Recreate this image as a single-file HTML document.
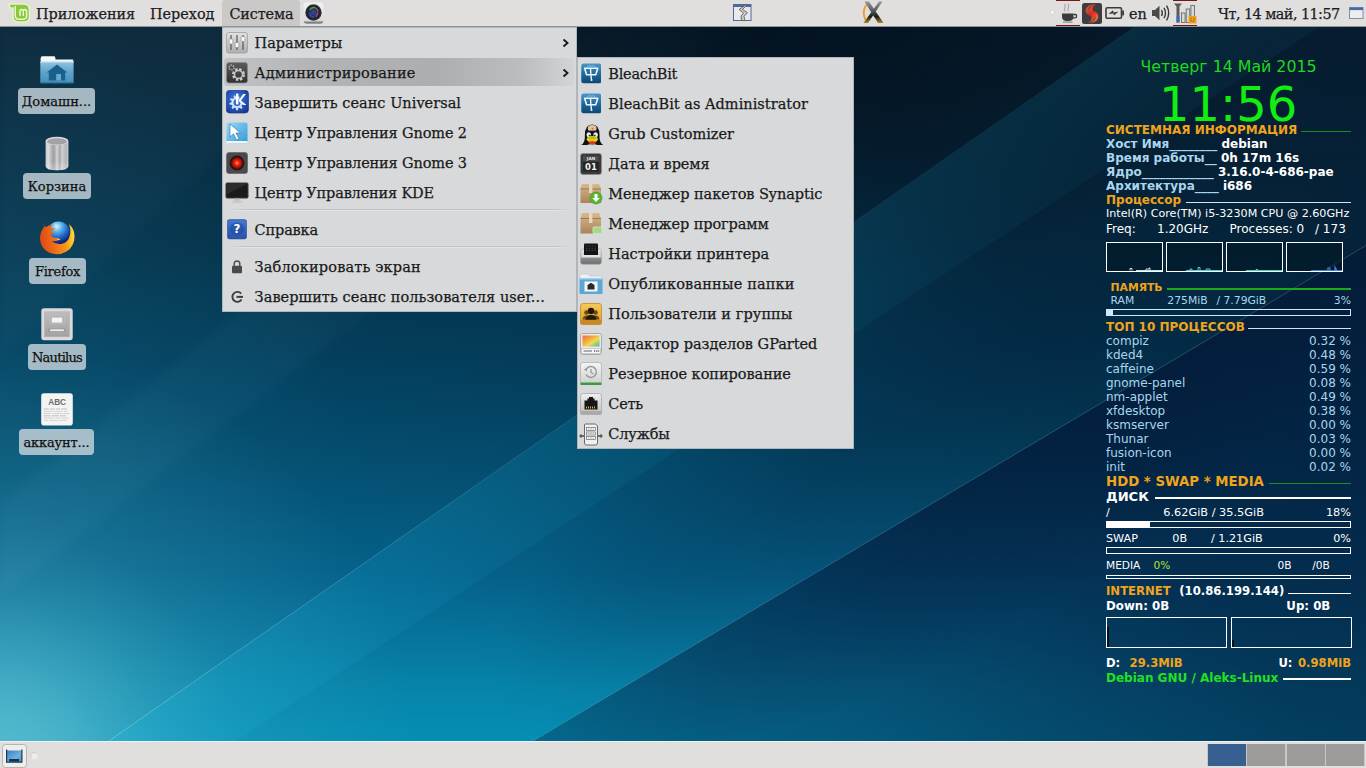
<!DOCTYPE html>
<html lang="ru">
<head>
<meta charset="utf-8">
<title>Desktop</title>
<style>
html,body{margin:0;padding:0;width:1366px;height:768px;overflow:hidden;background:#04304a;}
body{position:relative;font-family:"DejaVu Serif","Liberation Serif",serif;font-size:14.5px;color:#1a1a1a;}
#bg{position:absolute;left:0;top:0;width:1366px;height:768px;display:block;}
.abs{position:absolute;}

/* panels */
#tp{position:absolute;left:0;top:0;width:1366px;height:26px;background:#e0dfde;border-bottom:1px solid #8e9499;}
#bp{position:absolute;left:0;top:741px;width:1366px;height:27px;background:#e0dfde;border-top:1px solid #eef4f6;box-sizing:border-box;}
.pt{position:absolute;top:0;height:26px;line-height:29px;font-size:14.4px;color:#1b1b22;white-space:nowrap;}
#sysbtn{position:absolute;left:222px;top:0;width:78px;height:26px;background:#cac9c8;border-radius:3px 3px 0 0;}
.ic{position:absolute;display:block;}
/* desktop icons */
.dl{position:absolute;height:26px;line-height:27px;background:rgba(196,210,218,0.83);border-radius:4px;text-align:center;font-size:13px;color:#111;white-space:nowrap;}
/* menus */
.menu{position:absolute;background:#d7d9da;box-shadow:inset 0 0 0 1px rgba(150,156,164,0.6);}
.mi{position:absolute;left:0;height:30px;line-height:30px;white-space:nowrap;font-size:14.5px;color:#1a1a1a;}
.mi span{position:absolute;left:32.6px;top:0;}
#m2 .mi span{left:31.3px;}
.mi span,.pt,.dl{-webkit-text-stroke:0.25px currentColor;}
.sep{position:absolute;left:8px;right:8px;height:2px;background:linear-gradient(90deg,rgba(190,192,193,0) 0,#bfc1c2 14px,#bfc1c2 calc(100% - 14px),rgba(190,192,193,0) 100%) top/100% 1px no-repeat,linear-gradient(90deg,rgba(228,230,231,0) 0,#e4e6e7 14px,#e4e6e7 calc(100% - 14px),rgba(228,230,231,0) 100%) bottom/100% 1px no-repeat;}
/* conky */
#ck{position:absolute;left:0;top:0;width:1366px;height:0;font-family:"DejaVu Sans","Liberation Sans",sans-serif;font-size:12px;color:#fff;}
#ck span,#ck i{position:absolute;white-space:nowrap;line-height:14px;height:14px;font-style:normal;}
#ck .o{color:#f0a41c;font-weight:bold;}
#ck .b{color:#a9d6ee;font-weight:bold;}
#ck .w{color:#fff;font-weight:bold;}
#ck .l{color:#a9d6ee;}
#ck .g{color:#1fe01f;}
#ck .ln{position:absolute;height:1px;}
#ck .bx{position:absolute;border:1px solid #fff;box-sizing:border-box;}
</style>
</head>
<body>
<svg id="bg" width="1366" height="768" viewBox="0 0 1366 768">
<defs>
<linearGradient id="g0" x1="0" y1="27" x2="0" y2="741" gradientUnits="userSpaceOnUse">
<stop offset="0" stop-color="rgb(11,40,58)"/>
<stop offset="0.315" stop-color="rgb(6,52,76)"/>
<stop offset="0.473" stop-color="rgb(4,64,95)"/>
<stop offset="0.553" stop-color="rgb(4,72,104)"/>
<stop offset="0.765" stop-color="rgb(5,97,138)"/>
<stop offset="0.929" stop-color="rgb(7,132,170)"/>
<stop offset="1" stop-color="rgb(5,142,180)"/>
</linearGradient>
<linearGradient id="g2" x1="200" y1="768" x2="1366" y2="0" gradientUnits="userSpaceOnUse">
<stop offset="0.2" stop-color="rgb(2,15,36)" stop-opacity="0"/>
<stop offset="0.41" stop-color="rgb(2,15,36)" stop-opacity="0.08"/>
<stop offset="0.56" stop-color="rgb(2,15,36)" stop-opacity="0.22"/>
<stop offset="0.68" stop-color="rgb(2,15,36)" stop-opacity="0.37"/>
<stop offset="1" stop-color="rgb(2,15,36)" stop-opacity="0.5"/>
</linearGradient>
<radialGradient id="gLft" cx="-100" cy="450" r="450" gradientUnits="userSpaceOnUse">
<stop offset="0" stop-color="rgb(40,160,190)" stop-opacity="0.13"/>
<stop offset="0.5" stop-color="rgb(40,160,190)" stop-opacity="0.10"/>
<stop offset="1" stop-color="rgb(40,160,190)" stop-opacity="0"/>
</radialGradient>
<radialGradient id="g1" cx="0" cy="768" r="420" gradientUnits="userSpaceOnUse">
<stop offset="0" stop-color="rgb(110,200,215)" stop-opacity="0.75"/>
<stop offset="0.067" stop-color="rgb(110,200,215)" stop-opacity="0.72"/>
<stop offset="0.124" stop-color="rgb(110,200,215)" stop-opacity="0.67"/>
<stop offset="0.217" stop-color="rgb(110,200,215)" stop-opacity="0.55"/>
<stop offset="0.265" stop-color="rgb(110,200,215)" stop-opacity="0.46"/>
<stop offset="0.41" stop-color="rgb(110,200,215)" stop-opacity="0.27"/>
<stop offset="0.57" stop-color="rgb(110,200,215)" stop-opacity="0.13"/>
<stop offset="0.68" stop-color="rgb(110,200,215)" stop-opacity="0.09"/>
<stop offset="0.83" stop-color="rgb(110,200,215)" stop-opacity="0.05"/>
<stop offset="1" stop-color="rgb(110,200,215)" stop-opacity="0"/>
</radialGradient>
<linearGradient id="gD" x1="530" y1="0" x2="1100" y2="0" gradientUnits="userSpaceOnUse">
<stop offset="0" stop-color="rgb(3,19,54)" stop-opacity="0.31"/>
<stop offset="1" stop-color="rgb(3,19,54)" stop-opacity="0.44"/>
</linearGradient>
<linearGradient id="gL" x1="70" y1="768" x2="1173" y2="0" gradientUnits="userSpaceOnUse">
<stop offset="0" stop-color="#bfeaf5" stop-opacity="0.34"/>
<stop offset="0.45" stop-color="#bfeaf5" stop-opacity="0.11"/>
<stop offset="0.7" stop-color="#bfeaf5" stop-opacity="0.06"/>
<stop offset="1" stop-color="#bfeaf5" stop-opacity="0.03"/>
</linearGradient>
<radialGradient id="gT" cx="0" cy="0" r="1" gradientUnits="userSpaceOnUse" gradientTransform="translate(760 10) scale(560 270)">
<stop offset="0" stop-color="rgb(1,6,14)" stop-opacity="0.55"/>
<stop offset="0.5" stop-color="rgb(1,6,14)" stop-opacity="0.32"/>
<stop offset="1" stop-color="rgb(1,6,14)" stop-opacity="0"/>
</radialGradient>
<radialGradient id="gDe" cx="0" cy="0" r="1" gradientUnits="userSpaceOnUse" gradientTransform="translate(960 485) rotate(-30.9) scale(470 150)">
<stop offset="0" stop-color="rgb(2,13,42)" stop-opacity="0.3"/>
<stop offset="0.6" stop-color="rgb(2,13,42)" stop-opacity="0.14"/>
<stop offset="1" stop-color="rgb(2,13,42)" stop-opacity="0"/>
</radialGradient>
<radialGradient id="gCe" cx="0" cy="0" r="1" gradientUnits="userSpaceOnUse" gradientTransform="translate(830 470) rotate(-32) scale(380 120)">
<stop offset="0" stop-color="rgb(2,14,40)" stop-opacity="0.16"/>
<stop offset="0.6" stop-color="rgb(2,14,40)" stop-opacity="0.08"/>
<stop offset="1" stop-color="rgb(2,14,40)" stop-opacity="0"/>
</radialGradient>
<filter id="blr" x="-5%" y="-5%" width="110%" height="110%"><feGaussianBlur stdDeviation="5"/></filter>
<linearGradient id="gR" x1="0" y1="600" x2="700" y2="27" gradientUnits="userSpaceOnUse">
<stop offset="0" stop-color="rgb(140,210,235)" stop-opacity="0.05"/>
<stop offset="0.6" stop-color="rgb(140,210,235)" stop-opacity="0.025"/>
<stop offset="1" stop-color="rgb(140,210,235)" stop-opacity="0.01"/>
</linearGradient>
<linearGradient id="gBp" x1="600" y1="399" x2="651.4" y2="472.9" gradientUnits="userSpaceOnUse">
<stop offset="0" stop-color="rgb(20,180,222)" stop-opacity="0.125"/>
<stop offset="1" stop-color="rgb(20,180,222)" stop-opacity="0.055"/>
</linearGradient>
<linearGradient id="gBl" x1="70" y1="768" x2="640" y2="371" gradientUnits="userSpaceOnUse">
<stop offset="0" stop-color="rgb(30,190,230)" stop-opacity="0.09"/>
<stop offset="1" stop-color="rgb(30,190,230)" stop-opacity="0"/>
</linearGradient>
</defs>
<rect width="1366" height="768" fill="url(#g0)"/>
<rect width="1366" height="768" fill="url(#g2)"/>
<rect width="1366" height="768" fill="url(#gT)"/>
<rect width="1366" height="768" fill="url(#gLft)"/>
<rect width="1366" height="768" fill="url(#g1)"/>
<g filter="url(#blr)"><polygon points="0,27 358,27 0,358" fill="rgb(140,200,230)" fill-opacity="0.028"/>
<polygon points="0,504 595,27 740,27 0,597" fill="url(#gR)"/></g>
<!-- band B between E1 and E2 -->
<polygon points="70,768 1173,0 1360,0 195,768" fill="url(#gBp)"/>
<polygon points="70,768 1173,0 1360,0 195,768" fill="url(#gBl)"/>
<!-- region D below E3 -->
<polygon points="487.5,768 1366,245.5 1366,768" fill="url(#gD)"/>
<polygon points="487.5,768 1366,245.5 1366,768" fill="url(#gDe)"/>
<polygon points="195,768 1360,0 1366,0 1366,245.5 487.5,768" fill="url(#gCe)"/>
<line x1="70" y1="768" x2="1173" y2="0" stroke="url(#gL)" stroke-width="1"/>
<line x1="487.5" y1="768" x2="1366" y2="245.5" stroke="#9fd8ea" stroke-opacity="0.22" stroke-width="1"/>
</svg>
<!-- desktop icons -->
<svg class="ic" style="left:40px;top:55px" width="34" height="29" viewBox="0 0 34 29">
<defs><linearGradient id="fd1" x1="0" y1="0" x2="0" y2="1"><stop offset="0" stop-color="#8fc3df"/><stop offset="0.5" stop-color="#5ea3cb"/><stop offset="1" stop-color="#4390be"/></linearGradient></defs>
<path d="M1 2.5 Q1 1.2 2.3 1.2 H14 Q15 1.2 15.2 2.2 L15.6 4.6 H32.2 Q33.4 4.6 33.4 5.8 V8 H0.6 V3 Z" fill="#f5f8fa"/>
<rect x="0.3" y="6.8" width="33.3" height="21.4" rx="1" fill="url(#fd1)"/>
<rect x="0.3" y="6.8" width="33.3" height="1" fill="#b5d9ec"/>
<rect x="0.3" y="27" width="33.3" height="1.2" fill="#2f78a6"/>
<path d="M17 9.6 L27.4 17.6 H25.2 V25.5 H8.8 V17.6 H6.6 Z" fill="#1b608d"/>
<rect x="16.2" y="19" width="4.8" height="6.5" fill="#62aad0"/>
</svg>
<div class="dl" style="left:18px;top:88px;width:77px">Домашн...</div>
<svg class="ic" style="left:45px;top:136px" width="24" height="35" viewBox="0 0 24 35">
<defs><linearGradient id="tr1" x1="0" y1="0" x2="1" y2="0"><stop offset="0" stop-color="#c9c9cc"/><stop offset="0.12" stop-color="#dcdce0"/><stop offset="0.3" stop-color="#a9a9ad"/><stop offset="0.38" stop-color="#a2a2a6"/><stop offset="0.5" stop-color="#d6d6da"/><stop offset="0.62" stop-color="#a6a6aa"/><stop offset="0.72" stop-color="#cfcfd3"/><stop offset="0.9" stop-color="#b5b5b9"/><stop offset="1" stop-color="#d0d0d4"/></linearGradient>
<linearGradient id="tr2" x1="0" y1="0" x2="0" y2="1"><stop offset="0" stop-color="#fff" stop-opacity="0"/><stop offset="0.7" stop-color="#fff" stop-opacity="0"/><stop offset="1" stop-color="#fff" stop-opacity="0.3"/></linearGradient></defs>
<path d="M0.6 5 V30 Q0.6 34.2 12 34.2 Q23.4 34.2 23.4 30 V5 Z" fill="url(#tr1)"/>
<path d="M0.6 5 V30 Q0.6 34.2 12 34.2 Q23.4 34.2 23.4 30 V5 Z" fill="url(#tr2)"/>
<ellipse cx="12" cy="5" rx="11.4" ry="4.2" fill="#dadade"/>
<ellipse cx="12" cy="5.4" rx="10" ry="3.2" fill="#a3a3a7"/>
</svg>
<div class="dl" style="left:23px;top:173px;width:68px">Корзина</div>
<svg class="ic" style="left:39px;top:220px" width="37" height="36" viewBox="0 0 37 36">
<defs><radialGradient id="ffg" cx="0.42" cy="0.22" r="0.75"><stop offset="0" stop-color="#dff3fb"/><stop offset="0.3" stop-color="#5db4e8"/><stop offset="0.65" stop-color="#1f63c4"/><stop offset="1" stop-color="#0b1f6a"/></radialGradient>
<linearGradient id="ffo" x1="0" y1="0.3" x2="1" y2="0.2"><stop offset="0" stop-color="#e04a10"/><stop offset="0.4" stop-color="#f0701a"/><stop offset="0.72" stop-color="#f59a1c"/><stop offset="0.9" stop-color="#fdc92a"/><stop offset="1" stop-color="#ffe14a"/></linearGradient></defs>
<circle cx="19.5" cy="13" r="11.5" fill="url(#ffg)"/>
<path d="M4.2 3.8 L5.6 6.6 Q1 11.5 1 18.5 Q1.5 28.5 10 32.5 Q19 36.5 27.5 31.5 Q35.5 26.5 35.5 16.5 Q35.5 9 30 4 Q32.3 10 30.8 15.8 Q29.2 22.3 23 23.8 Q17 24.8 12.3 21 Q16.8 22 21 19.6 Q18.5 18 14.8 17.6 Q12.2 17 11.8 14.6 L15 12.2 L12.2 11.2 L16.5 8.2 L11.4 8.2 L13.6 5 Q9.2 5 6.8 7.2 Z" fill="url(#ffo)"/>
<path d="M17.5 18.6 Q20 18.2 21.4 19.6 Q19.5 20.4 17.5 18.6 Z" fill="#fbe3b0"/>
</svg>
<div class="dl" style="left:29px;top:258px;width:57px;letter-spacing:-0.28px">Firefox</div>
<svg class="ic" style="left:41px;top:307.5px" width="32" height="33" viewBox="0 0 32 33">
<defs><linearGradient id="nt1" x1="0" y1="0" x2="0" y2="1"><stop offset="0" stop-color="#bdbdbd"/><stop offset="1" stop-color="#a2a2a2"/></linearGradient></defs>
<rect x="0.3" y="0.3" width="31.4" height="32" rx="2.8" fill="#dadadd"/>
<rect x="3.6" y="3.8" width="24.8" height="25" fill="url(#nt1)" stroke="#b9adad" stroke-width="0.6"/>
<rect x="8.5" y="7.5" width="15" height="8.5" fill="#b3b3b3" stroke="#bfbfbf" stroke-width="0.5"/>
<rect x="10.8" y="9.6" width="10.4" height="5" fill="#f4f4f4"/>
<rect x="7.5" y="20.6" width="17" height="3.4" fill="#9a9a9a"/>
<rect x="9.2" y="21.4" width="13.6" height="1.7" fill="#f1f1f1"/>
</svg>
<div class="dl" style="left:28px;top:344px;width:58px;letter-spacing:-0.75px">Nautilus</div>
<svg class="ic" style="left:41px;top:392.5px" width="32" height="33" viewBox="0 0 32 33">
<rect x="0.2" y="0.3" width="31.6" height="32.2" rx="2.8" fill="#f3f4f4"/>
<text x="7.2" y="11.9" textLength="17.9" lengthAdjust="spacingAndGlyphs" font-family="Liberation Sans, sans-serif" font-weight="bold" font-size="8.9" fill="#6c6c6c">ABC</text>
<g stroke="#d3cccc" stroke-width="0.9">
<path d="M2.6 16 H8 M9 16 H14 M15 16 H19 M20 16 H26" stroke="#bdb8b8"/><path d="M2.6 18.3 H12 M13 18.3 H22 M23 18.3 H27"/><path d="M2.6 20.5 H10 M11 20.5 H21 M22 20.5 H29"/><path d="M2.6 22.8 H9 M10 22.8 H18 M19 22.8 H25" stroke="#bdb8b8"/><path d="M2.6 25 H13 M14 25 H20 M21 25 H28"/><path d="M2.6 27.3 H7 M8 27.3 H17 M18 27.3 H26"/>
</g>
</svg>
<div class="dl" style="left:19px;top:429px;width:75px;letter-spacing:-0.17px">аккаунт...</div>
<div id="tp">
<div id="sysbtn"></div>
<!-- mint logo -->
<svg class="ic" style="left:8px;top:2px" width="23" height="22" viewBox="0 0 23 22">
<path d="M1.5 2 H15.5 Q21.5 2 21.5 8 V14.5 Q21.5 20 16 20 H10.5 Q5 20 5 14.5 V6 H1.5 Z" fill="#8cc63e" stroke="#e3f5c4" stroke-width="1.6" stroke-linejoin="round"/>
<path d="M7.2 4.5 V13.2 Q7.2 17.2 11 17.2 H15.4 Q18.6 17.2 18.6 13.6 V9.6 Q18.6 7.6 16.9 7.6 Q15.3 7.6 15.3 9.6 V13.5 M15.3 9.6 Q15.3 7.6 13.6 7.6 Q12 7.6 12 9.6 V13.5" fill="none" stroke="#eaf8d2" stroke-width="1.5" stroke-linecap="round" stroke-linejoin="round"/>
</svg>
<div class="pt" style="left:36px">Приложения</div>
<div class="pt" style="left:150px">Переход</div>
<div class="pt" style="left:229.5px;letter-spacing:-0.15px">Система</div>
<!-- camera icon -->
<svg class="ic" style="left:303px;top:2px" width="21" height="22" viewBox="0 0 21 22">
<defs><linearGradient id="cmb" x1="0" y1="0" x2="0" y2="1"><stop offset="0" stop-color="#f2f2f4"/><stop offset="0.85" stop-color="#dcdce0"/><stop offset="1" stop-color="#55555a"/></linearGradient>
<radialGradient id="cml" cx="0.5" cy="0.5" r="0.5"><stop offset="0" stop-color="#3b4a9a"/><stop offset="0.55" stop-color="#232a5a"/><stop offset="0.8" stop-color="#222"/><stop offset="1" stop-color="#3a3a3a"/></radialGradient></defs>
<rect x="0.5" y="0.5" width="20" height="21" rx="3" fill="url(#cmb)"/>
<circle cx="10.5" cy="10.5" r="8.2" fill="url(#cml)"/>
<path d="M7 7.5 Q9 5.2 11.5 5.6" stroke="#5ad04a" stroke-width="1.5" fill="none" stroke-linecap="round" opacity="0.7"/>
<path d="M12.5 6 Q14.5 7 15 9" stroke="#e8a23a" stroke-width="1.2" fill="none" stroke-linecap="round" opacity="0.6"/>
<path d="M14.6 11 Q14.4 13 13.2 14.2" stroke="#e24a9a" stroke-width="1.4" fill="none" stroke-linecap="round" opacity="0.75"/>
<path d="M6.8 12 Q8 15 10.5 15" stroke="#3a6ae0" stroke-width="1.6" fill="none" stroke-linecap="round" opacity="0.6"/>
</svg>
<!-- xkill-like window icon -->
<svg class="ic" style="left:733px;top:4px" width="19" height="17" viewBox="0 0 19 17">
<rect x="0.5" y="0.5" width="17.5" height="16" fill="#e9e9ea" stroke="#4d6a9c" stroke-width="1"/>
<rect x="0.5" y="0.5" width="17.5" height="2.5" fill="#4d6a9c"/>
<path d="M12.5 1 L6 5.5 L10.5 9 L8 12 L8.5 16.5 L12 16.5 L11 12.5 L14.5 8.5 L9.5 5.5 L14 1 Z" fill="#c8c8c8" stroke="#555" stroke-width="0.8" stroke-linejoin="round"/>
</svg>
<!-- X icon -->
<svg class="ic" style="left:860px;top:1px" width="26" height="23" viewBox="0 0 26 23">
<defs><linearGradient id="xg1" x1="0" y1="0" x2="0" y2="1"><stop offset="0" stop-color="#9a9a9a"/><stop offset="0.45" stop-color="#555"/><stop offset="0.7" stop-color="#1a1a1a"/><stop offset="1" stop-color="#a88a2a"/></linearGradient></defs>
<path d="M6.5 3.5 Q1.5 10.5 5.5 19" fill="none" stroke="#f09a2a" stroke-width="1.8"/>
<path d="M4.5 0.5 L9 0.5 L23.5 22 L18 22 Z" fill="url(#xg1)"/>
<path d="M19 0.5 L22.5 0.5 L8 22 L3.5 22 Z" fill="url(#xg1)"/>
</svg>
<!-- tray -->
<svg class="ic" style="left:1049px;top:9px" width="7" height="7" viewBox="0 0 7 7"><circle cx="3.3" cy="3.3" r="2.4" fill="#f3f3f3" stroke="#cfcfcf" stroke-width="0.8"/></svg>
<div class="abs" style="left:1056px;top:0;width:24px;height:1px;background:#7a1515"></div>
<div class="abs" style="left:1056px;top:24.5px;width:24px;height:1.5px;background:#7a1515"></div>
<svg class="ic" style="left:1060px;top:3px" width="18" height="20" viewBox="0 0 18 20">
<path d="M4.5 1 Q6 3 4.8 5 Q3.8 7 5.2 8.5" fill="none" stroke="#9a9a9a" stroke-width="0.9"/>
<path d="M8 0.5 Q9.5 3 8.2 5 Q7.2 7 8.6 8.5" fill="none" stroke="#9a9a9a" stroke-width="0.9"/>
<path d="M2 10.5 H13.5 V13.5 Q13.5 17.5 9.5 18 H6 Q2 17.5 2 13.5 Z" fill="#3b3b3b"/>
<path d="M13.5 11.5 H15.8 Q16.5 11.5 16.5 12.5 V13.5 Q16.5 14.8 15 14.8 H13" fill="none" stroke="#3b3b3b" stroke-width="1.3"/>
<rect x="3" y="18.5" width="9.5" height="1.2" fill="#8a8a8a"/>
</svg>
<svg class="ic" style="left:1082px;top:3px" width="20" height="21" viewBox="0 0 20 21">
<defs><linearGradient id="swg" x1="0" y1="0" x2="1" y2="1"><stop offset="0" stop-color="#f26a3a"/><stop offset="0.5" stop-color="#e0281e"/><stop offset="1" stop-color="#ff8a4a"/></linearGradient></defs>
<rect x="0" y="0" width="20" height="21" rx="2.5" fill="#3d3d3f"/>
<path d="M14.5 1.5 Q5.5 3 7.5 9 Q9 12.5 12 12.5 Q14.5 14.5 12.5 17 Q10 19.5 5 19.5 Q13 21 16 15.5 Q17.5 10.5 12.5 8.5 Q9.5 7 11 4 Q12 2 14.5 1.5 Z" fill="url(#swg)"/>
<path d="M5.5 19.5 Q14.5 18 12.5 12 Q11 8.5 8 8.5 Q5.5 6.5 7.5 4 Q10 1.5 15 1.5 Q7 0 4 5.5 Q2.5 10.5 7.5 12.5 Q10.5 14 9 17 Q8 19 5.5 19.5 Z" fill="url(#swg)" opacity="0.85"/>
</svg>
<svg class="ic" style="left:1105px;top:7px" width="20" height="12" viewBox="0 0 20 12">
<rect x="1" y="0.8" width="15.5" height="10.4" rx="1.3" fill="none" stroke="#3a3a3a" stroke-width="1.6"/>
<rect x="17.2" y="3.6" width="1.8" height="4.8" fill="#3a3a3a"/>
<path d="M3.5 7 L8 3.2 L8.6 5.5 L13.5 4.6 L9 8.6 L8.4 6.4 Z" fill="#3a3a3a"/>
</svg>
<div class="pt" style="left:1129px;font-size:14.4px">en</div>
<svg class="ic" style="left:1151px;top:4px" width="20" height="18" viewBox="0 0 20 18">
<path d="M1 6 H4 L8.5 1.8 V16.2 L4 12 H1 Z" fill="#4a4a4a"/>
<path d="M10.5 6 Q12.2 9 10.5 12" fill="none" stroke="#3a3a3a" stroke-width="1.4"/>
<path d="M13 3.8 Q16 9 13 14.2" fill="none" stroke="#3a3a3a" stroke-width="1.4"/>
<path d="M15.6 1.6 Q19.8 9 15.6 16.4" fill="none" stroke="#3a3a3a" stroke-width="1.4"/>
</svg>
<div class="abs" style="left:1173px;top:0;width:24px;height:1px;background:#7a1515"></div>
<div class="abs" style="left:1173px;top:24.5px;width:24px;height:1.5px;background:#7a1515"></div>
<svg class="ic" style="left:1173px;top:2px" width="24" height="22" viewBox="0 0 24 22">
<path d="M1 1.5 H9 L6.5 4.5 V20.5 H3.5 V4.5 Z" fill="#5a5a5a"/>
<rect x="3.5" y="14" width="3" height="6.5" fill="#3d6ab0"/>
<rect x="8.5" y="11" width="3.6" height="9.5" fill="#d8d8d8" stroke="#6a6a6a" stroke-width="0.9"/>
<rect x="13.2" y="7" width="3.6" height="13.5" fill="#d8d8d8" stroke="#6a6a6a" stroke-width="0.9"/>
<rect x="17.9" y="3.5" width="3.6" height="17" fill="#d8d8d8" stroke="#6a6a6a" stroke-width="0.9"/>
<rect x="15.5" y="14" width="8" height="7.5" fill="#f0a020"/>
<path d="M18 15.5 V18.5 Q18 19.8 19.5 19.8 Q21 19.8 21 18.5 V15.5" fill="none" stroke="#b06a10" stroke-width="1"/>
</svg>
<div class="pt" style="left:1218px;letter-spacing:-0.56px">Чт, 14 май, 11:57</div>
<svg class="ic" style="left:1349px;top:7px" width="15" height="12" viewBox="0 0 15 12">
<rect x="0.5" y="0.5" width="13.5" height="11" fill="#eceded" stroke="#7f8fa8" stroke-width="1"/>
<rect x="0.5" y="0.5" width="13.5" height="2.6" fill="#4a69a2"/>
</svg>
</div>
<div id="bp">
<div class="abs" style="left:1.5px;top:1.5px;width:25.5px;height:24px;border:1px solid #b4b4b4;border-radius:3.5px;box-sizing:border-box;background:#efeeed"></div>
<svg class="ic" style="left:6px;top:6.5px" width="17" height="14" viewBox="0 0 17 14">
<defs><linearGradient id="sdk" x1="0" y1="0" x2="1" y2="1"><stop offset="0" stop-color="#3a7fbd"/><stop offset="0.6" stop-color="#6fb0de"/><stop offset="1" stop-color="#4a93cc"/></linearGradient></defs>
<rect x="0.5" y="1.5" width="15.5" height="11.5" fill="url(#sdk)"/>
<path d="M0.6 0.5 V13.2 H15.9 V0.5" fill="none" stroke="#1d3856" stroke-width="1.2"/>
<rect x="3" y="10" width="10.2" height="2.6" fill="#17324f"/>
</svg>
<svg class="ic" style="left:29.5px;top:9.5px" width="9" height="9" viewBox="0 0 9 9"><circle cx="4.3" cy="4.3" r="3.2" fill="#eceaea"/><path d="M1.4 5.6 A3.2 3.2 0 0 1 6.4 1.6" fill="none" stroke="#c8c8c8" stroke-width="0.8"/></svg>
<div class="abs" style="left:1207px;top:1.5px;width:158px;height:22.5px;background:#c9c8c6"></div>
<div class="abs" style="left:1208px;top:2px;width:37.8px;height:21.6px;background:#375f90"></div>
<div class="abs" style="left:1247.2px;top:2px;width:37.6px;height:21.6px;background:#9d9b99"></div>
<div class="abs" style="left:1286.5px;top:2px;width:38px;height:21.6px;background:#9d9b99"></div>
<div class="abs" style="left:1326.2px;top:2px;width:38px;height:21.6px;background:#9d9b99"></div>
</div>
<!-- conky -->
<div id="ck">
<span class="g" style="top:56.63px;font-size:15.8px;left:1140.5px;line-height:20px;height:20px;color:#20d820;">Четверг 14 Май 2015</span>
<span class="g" style="top:78.89px;font-size:48px;left:1159.0px;line-height:50px;height:50px;color:#12ee12;">11:56</span>
<span class="o" style="top:123.25px;font-size:12px;left:1106.0px;">СИСТЕМНАЯ ИНФОРМАЦИЯ</span>
<div class="ln" style="left:1300.5px;top:131.3px;width:50.5px;height:1.0px;background:#1a8c1a"></div>
<span class="b" style="top:137.15px;font-size:12px;left:1106.0px;">Хост Имя________ <i class="w" style="position:static">debian</i></span>
<span class="b" style="top:151.05px;font-size:12px;left:1106.0px;">Время работы__ <i class="w" style="position:static">0h 17m 16s</i></span>
<span class="b" style="top:164.95px;font-size:12px;left:1106.0px;">Ядро____________ <i class="w" style="position:static">3.16.0-4-686-pae</i></span>
<span class="b" style="top:179.05px;font-size:12px;left:1106.0px;">Архитектура____ <i class="w" style="position:static">i686</i></span>
<span class="o" style="top:193.05px;font-size:12px;left:1106.0px;">Процессор</span>
<div class="ln" style="left:1185.5px;top:201.7px;width:165.5px;height:1.0px;background:#cfe6f2"></div>
<span class="" style="top:207.44px;font-size:11.15px;left:1106.0px;">Intel(R) Core(TM) i5-3230M CPU @ 2.60GHz</span>
<span class="" style="top:222.05px;font-size:12px;left:1106.0px;">Freq:</span>
<span class="" style="top:222.05px;font-size:12px;left:1157.0px;">1.20GHz</span>
<span class="" style="top:222.05px;font-size:12px;left:1229.5px;">Processes: 0</span>
<span class="" style="top:222.05px;font-size:12px;left:1315.0px;">/ 173</span>
<div class="bx" style="left:1106.0px;top:241.5px;width:57.0px;height:30.5px;border-color:#fff;background:rgba(0,18,28,0.4);"></div>
<div class="bx" style="left:1166.0px;top:241.5px;width:57.0px;height:30.5px;border-color:#fff;background:rgba(0,18,28,0.4);"></div>
<div class="bx" style="left:1226.0px;top:241.5px;width:57.0px;height:30.5px;border-color:#fff;background:rgba(0,18,28,0.4);"></div>
<div class="bx" style="left:1286.0px;top:241.5px;width:57.0px;height:30.5px;border-color:#fff;background:rgba(0,18,28,0.4);"></div>
<svg class="ic" style="left:1106px;top:241px" width="240" height="31" viewBox="0 0 240 31"><path d="M24 29.5 V27.5 H26 V29.5 M40 29.5 V28 H43 V27 H44 V29.5 M30 29.5 H56" fill="none" stroke="#bfe3ee" stroke-width="1"/><path d="M84 29.5 V28 H86 V29.5 M92 29.5 V26.5 H94 V29.5 M100 29.5 V28 H104 V29.5 M80 29.5 H116" fill="none" stroke="#4fd0c8" stroke-width="1"/><path d="M140 29.5 H176 M150 29.5 V28.5 H152" fill="none" stroke="#3fd6b0" stroke-width="1"/><path d="M222 29.5 V27 H224 V29.5 M229 29.5 V26 L231 29.5 M205 29.5 H236" fill="none" stroke="#3f7fe0" stroke-width="1.2"/></svg>
<span class="o" style="top:280.96px;font-size:10.8px;left:1110.5px;">ПАМЯТЬ</span>
<div class="ln" style="left:1167.0px;top:287.6px;width:184.0px;height:2.0px;background:#1ea81e"></div>
<span class="l" style="top:294.26px;font-size:10.8px;left:1110.5px;">RAM</span>
<span class="l" style="top:294.26px;font-size:10.8px;left:1167.3px;">275MiB</span>
<span class="l" style="top:294.26px;font-size:10.8px;left:1216.4px;">/ 7.79GiB</span>
<span class="l" style="top:294.26px;font-size:10.8px;right:15.0px;">3%</span>
<div class="bx" style="left:1106.0px;top:309.3px;width:245.0px;height:7.0px;border-color:#cde8f6;"></div>
<div class="ln" style="left:1106.0px;top:309.3px;width:7.0px;height:7.0px;background:#cde8f6"></div>
<span class="o" style="top:320.35px;font-size:12px;left:1106.0px;">ТОП 10 ПРОЦЕССОВ</span>
<div class="ln" style="left:1247.5px;top:328.3px;width:103.5px;height:1.0px;background:#cfe6f2"></div>
<span class="l" style="top:334.45px;font-size:12px;left:1106.0px;font-weight:normal;">compiz</span>
<span class="l" style="top:334.45px;font-size:12px;right:15.0px;">0.32 %</span>
<span class="l" style="top:348.40px;font-size:12px;left:1106.0px;font-weight:normal;">kded4</span>
<span class="l" style="top:348.40px;font-size:12px;right:15.0px;">0.48 %</span>
<span class="l" style="top:362.35px;font-size:12px;left:1106.0px;font-weight:normal;">caffeine</span>
<span class="l" style="top:362.35px;font-size:12px;right:15.0px;">0.59 %</span>
<span class="l" style="top:376.30px;font-size:12px;left:1106.0px;font-weight:normal;">gnome-panel</span>
<span class="l" style="top:376.30px;font-size:12px;right:15.0px;">0.08 %</span>
<span class="l" style="top:390.25px;font-size:12px;left:1106.0px;font-weight:normal;">nm-applet</span>
<span class="l" style="top:390.25px;font-size:12px;right:15.0px;">0.49 %</span>
<span class="l" style="top:404.20px;font-size:12px;left:1106.0px;font-weight:normal;">xfdesktop</span>
<span class="l" style="top:404.20px;font-size:12px;right:15.0px;">0.38 %</span>
<span class="l" style="top:418.15px;font-size:12px;left:1106.0px;font-weight:normal;">ksmserver</span>
<span class="l" style="top:418.15px;font-size:12px;right:15.0px;">0.00 %</span>
<span class="l" style="top:432.10px;font-size:12px;left:1106.0px;font-weight:normal;">Thunar</span>
<span class="l" style="top:432.10px;font-size:12px;right:15.0px;">0.03 %</span>
<span class="l" style="top:446.05px;font-size:12px;left:1106.0px;font-weight:normal;">fusion-icon</span>
<span class="l" style="top:446.05px;font-size:12px;right:15.0px;">0.00 %</span>
<span class="l" style="top:460.00px;font-size:12px;left:1106.0px;font-weight:normal;">init</span>
<span class="l" style="top:460.00px;font-size:12px;right:15.0px;">0.02 %</span>
<span class="o" style="top:475.00px;font-size:13.3px;left:1106.0px;">HDD * SWAP * MEDIA</span>
<div class="ln" style="left:1269.0px;top:483.0px;width:82.0px;height:1.0px;background:#1f8f1f"></div>
<span class="w" style="top:489.77px;font-size:13.1px;left:1106.0px;">ДИСК</span>
<div class="ln" style="left:1155.0px;top:496.8px;width:196.0px;height:2.3px;background:#fff"></div>
<span class="" style="top:505.79px;font-size:11.3px;left:1106.0px;">/</span>
<span class="" style="top:505.79px;font-size:11.3px;left:1163.3px;">6.62GiB / 35.5GiB</span>
<span class="" style="top:505.79px;font-size:11.3px;right:15.0px;">18%</span>
<div class="bx" style="left:1106.0px;top:521.2px;width:245.0px;height:7.0px;border-color:#fff;"></div>
<div class="ln" style="left:1106.0px;top:521.2px;width:44.2px;height:7.0px;background:#fff"></div>
<span class="" style="top:531.62px;font-size:11.2px;left:1106.0px;">SWAP</span>
<span class="" style="top:531.62px;font-size:11.2px;left:1172.3px;">0B</span>
<span class="" style="top:531.62px;font-size:11.2px;left:1211.0px;">/ 1.21GiB</span>
<span class="" style="top:531.62px;font-size:11.2px;right:15.0px;">0%</span>
<div class="bx" style="left:1106.0px;top:547.4px;width:245.0px;height:6.9px;border-color:#fff;"></div>
<span class="" style="top:557.83px;font-size:10.6px;left:1106.0px;">MEDIA</span>
<span class="" style="top:557.83px;font-size:10.6px;left:1153.5px;color:#b4e02c;">0%</span>
<span class="" style="top:557.83px;font-size:10.6px;left:1277.5px;">0B</span>
<span class="" style="top:557.83px;font-size:10.6px;left:1312.3px;">/0B</span>
<div class="bx" style="left:1106.0px;top:574.6px;width:245.0px;height:4.8px;border-color:#fff;"></div>
<span class="o" style="top:584.25px;font-size:11.7px;left:1106.0px;">INTERNET</span>
<span class="w" style="top:584.27px;font-size:11.65px;left:1179.3px;">(10.86.199.144)</span>
<div class="ln" style="left:1288.0px;top:593.0px;width:63.0px;height:1.0px;background:#fff"></div>
<span class="w" style="top:598.52px;font-size:11.8px;left:1106.0px;">Down: 0B</span>
<span class="w" style="top:598.52px;font-size:11.8px;left:1286.3px;">Up: 0B</span>
<div class="bx" style="left:1106.0px;top:616.8px;width:121.3px;height:31.4px;border-color:#fff;"></div>
<div class="bx" style="left:1231.0px;top:616.8px;width:121.3px;height:31.4px;border-color:#fff;"></div>
<div class="ln" style="left:1107px;top:627px;width:1.5px;height:20px;background:#04101c"></div>
<div class="ln" style="left:1232px;top:640px;width:2px;height:7px;background:#04101c"></div>
<span class="w" style="top:656.49px;font-size:11.6px;left:1106.0px;">D:</span>
<span class="o" style="top:656.49px;font-size:11.6px;left:1129.6px;">29.3MiB</span>
<span class="w" style="top:656.49px;font-size:11.6px;left:1278.4px;">U:</span>
<span class="o" style="top:656.49px;font-size:11.6px;right:15.0px;">0.98MiB</span>
<span class="g" style="top:670.55px;font-size:12px;left:1106.0px;font-weight:bold;color:#22e022;">Debian GNU / Aleks-Linux</span>
<div class="ln" style="left:1283.0px;top:677.7px;width:68.0px;height:2.3px;background:#fff"></div>
</div>
<!-- /conky -->
<!-- main menu -->
<div class="menu" id="m1" style="left:222px;top:27px;width:355px;height:285px">
<div class="abs" style="left:2px;top:31px;width:350px;height:28px;border-radius:3px;background:linear-gradient(90deg,#c2c3c4 0%,#b3b4b5 25%,#adaeaf 60%,#bcbdbe 85%,#d2d4d5 100%)"></div>
<div class="mi" style="top:1px"><svg class="ic" style="left:4px;top:4px" width="22" height="22" viewBox="0 0 22 22">
<defs><linearGradient id="i1" x1="0" y1="0" x2="0" y2="1"><stop offset="0" stop-color="#e3e3e3"/><stop offset="1" stop-color="#aeaeae"/></linearGradient></defs>
<rect x="0.5" y="0.5" width="21" height="20.5" rx="2.5" fill="url(#i1)" stroke="#9d9d9d" stroke-width="0.8"/>
<g stroke="#555" stroke-width="1.2"><line x1="5" y1="3" x2="5" y2="18"/><line x1="11" y1="3" x2="11" y2="18"/><line x1="17" y1="3" x2="17" y2="18"/></g>
<rect x="3.2" y="7" width="3.6" height="5" rx="0.8" fill="#fafafa" stroke="#777" stroke-width="0.5"/>
<rect x="9.2" y="10.5" width="3.6" height="5" rx="0.8" fill="#fafafa" stroke="#777" stroke-width="0.5"/>
<rect x="15.2" y="4.5" width="3.6" height="5" rx="0.8" fill="#fafafa" stroke="#777" stroke-width="0.5"/>
</svg><span style="letter-spacing:-0.024px">Параметры</span></div>
<div class="mi" style="top:31px"><svg class="ic" style="left:4px;top:4px" width="22" height="22" viewBox="0 0 22 22">
<defs><linearGradient id="i2" x1="0" y1="0" x2="0" y2="1"><stop offset="0" stop-color="#5c5c5c"/><stop offset="1" stop-color="#2f2f2f"/></linearGradient></defs>
<rect x="0.5" y="0.5" width="21" height="20.5" rx="2.5" fill="url(#i2)" stroke="#8a8a8a" stroke-width="0.8"/>
<circle cx="12.5" cy="12.5" r="5.2" fill="none" stroke="#c9c9c9" stroke-width="2.6" stroke-dasharray="2.4 1.7"/>
<circle cx="12.5" cy="12.5" r="4" fill="none" stroke="#c9c9c9" stroke-width="1.4"/>
<circle cx="5.5" cy="5.5" r="2.4" fill="none" stroke="#aaa" stroke-width="1.6" stroke-dasharray="1.3 1"/>
</svg><span style="letter-spacing:0.171px">Администрирование</span></div>
<div class="mi" style="top:61px"><svg class="ic" style="left:3.6px;top:2px" width="23" height="23.5" viewBox="0 0 23 23.5">
<defs><radialGradient id="i3" cx="0.45" cy="0.4" r="0.7"><stop offset="0" stop-color="#4a80dc"/><stop offset="0.6" stop-color="#2454b8"/><stop offset="1" stop-color="#16378c"/></radialGradient>
<clipPath id="kcl"><path d="M0 6.5 H9.6 V0 H0 Z M0 6.5 H13.4 V11 L16.2 13.4 L20 23.5 H0 Z"/></clipPath></defs>
<rect x="0.3" y="0.3" width="22.2" height="22.8" rx="3.6" fill="url(#i3)" stroke="#18347e" stroke-width="0.6"/>
<g clip-path="url(#kcl)" opacity="0.93"><path d="M12.48 17.38 L11.69 20.27 L10.31 20.27 L9.52 17.38 Z M9.06 17.21 L6.60 18.92 L5.54 18.03 L6.80 15.31 Z M6.55 14.88 L3.57 14.61 L3.33 13.25 L6.04 11.98 Z M6.12 11.49 L4.01 9.36 L4.70 8.17 L7.60 8.93 Z M7.98 8.62 L7.73 5.63 L9.02 5.16 L10.75 7.61 Z M11.25 7.61 L12.98 5.16 L14.27 5.63 L14.02 8.62 Z M14.40 8.93 L17.30 8.17 L17.99 9.36 L15.88 11.49 Z M15.96 11.98 L18.67 13.25 L18.43 14.61 L15.45 14.88 Z M15.20 15.31 L16.46 18.03 L15.40 18.92 L12.94 17.21 Z" fill="#e6eefc"/>
<circle cx="11" cy="12.6" r="4.5" fill="none" stroke="#e6eefc" stroke-width="1.9"/></g>
<rect x="10" y="3.6" width="2.4" height="10.8" fill="#fff"/>
<path d="M12.9 9.9 L17.2 3.9 L19.9 3.9 L14.9 10.6 L20.4 15 L17.5 15 L13.1 11.4 Z" fill="#fff"/>
</svg><span style="letter-spacing:0.026px">Завершить сеанс Universal</span></div>
<div class="mi" style="top:91px"><svg class="ic" style="left:4px;top:4px" width="22" height="22" viewBox="0 0 22 22">
<defs><linearGradient id="i4" x1="0" y1="0" x2="1" y2="1"><stop offset="0" stop-color="#9ad8f5"/><stop offset="1" stop-color="#2f9ad8"/></linearGradient></defs>
<rect x="0.5" y="0.5" width="21" height="21" rx="1.5" fill="url(#i4)"/>
<rect x="0.5" y="19" width="21" height="2.5" fill="#f1f5f8"/>
<path d="M4 2 L4 15 L7.5 11.8 L10.5 18 L13 16.8 L10 11 L14.5 11 Z" fill="#fff" stroke="#2a6a9a" stroke-width="0.6"/>
</svg><span style="letter-spacing:-0.143px">Центр Управления Gnome 2</span></div>
<div class="mi" style="top:121px"><svg class="ic" style="left:4px;top:4px" width="22" height="22" viewBox="0 0 22 22">
<defs><radialGradient id="i5" cx="0.5" cy="0.5" r="0.5"><stop offset="0" stop-color="#ffb347"/><stop offset="0.3" stop-color="#ff2a12"/><stop offset="0.75" stop-color="#a40c06"/><stop offset="1" stop-color="#3a0a08"/></radialGradient></defs>
<rect x="0.5" y="0.5" width="21" height="21" rx="2.5" fill="#4a4a4c" stroke="#6a6a6a" stroke-width="0.8"/>
<circle cx="11" cy="11" r="7.4" fill="#1c1c1c"/>
<circle cx="11" cy="11" r="6.2" fill="url(#i5)"/>
</svg><span style="letter-spacing:-0.143px">Центр Управления Gnome 3</span></div>
<div class="mi" style="top:151px"><svg class="ic" style="left:3px;top:4px" width="24" height="22" viewBox="0 0 24 22">
<rect x="1" y="1" width="22" height="15" rx="1" fill="#1b1b1b" stroke="#3c3c3c" stroke-width="1"/>
<path d="M2 2 H22 L2 12 Z" fill="#3a3a3a" opacity="0.6"/>
<rect x="9.5" y="16.5" width="5" height="2.5" fill="#bdbdbd"/>
<ellipse cx="12" cy="19.8" rx="5.5" ry="1.3" fill="#c9c9c9"/>
</svg><span style="letter-spacing:-0.183px">Центр Управления KDE</span></div>
<div class="sep" style="top:182px"></div>
<div class="mi" style="top:188px"><svg class="ic" style="left:5px;top:4.2px" width="20" height="20.5" viewBox="0 0 22 22">
<defs><linearGradient id="i6" x1="0" y1="0" x2="0" y2="1"><stop offset="0" stop-color="#4678d2"/><stop offset="0.6" stop-color="#2f5fba"/><stop offset="1" stop-color="#2a54a6"/></linearGradient></defs>
<rect x="0.4" y="0.4" width="21.2" height="21.2" rx="2.4" fill="url(#i6)" stroke="#2c4f96" stroke-width="0.7"/>
<ellipse cx="11" cy="10.5" rx="8" ry="7" fill="#234c9c" opacity="0.6"/>
<text x="11" y="15.3" text-anchor="middle" font-family="DejaVu Sans, sans-serif" font-weight="bold" font-size="13" fill="#fff">?</text>
</svg><span style="letter-spacing:-0.166px">Справка</span></div>
<div class="sep" style="top:219px"></div>
<div class="mi" style="top:225px"><svg class="ic" style="left:9px;top:8px" width="12" height="14" viewBox="0 0 12 14">
<path d="M3.2 6 V3.8 Q3.2 1 6 1 Q8.8 1 8.8 3.8 V6" fill="none" stroke="#4a4a4a" stroke-width="1.4"/>
<rect x="1" y="5.8" width="10" height="7.4" rx="1" fill="#4a4a4a"/>
</svg><span style="letter-spacing:0.163px">Заблокировать экран</span></div>
<div class="mi" style="top:255px"><svg class="ic" style="left:8px;top:8px" width="14" height="14" viewBox="0 0 14 14">
<path d="M11.2 3.6 A5 5 0 1 0 11.6 9.6" fill="none" stroke="#3d3d3d" stroke-width="1.9"/>
<rect x="6.5" y="5.9" width="6.5" height="2" fill="#3d3d3d"/>
</svg><span style="letter-spacing:0.059px">Завершить сеанс пользователя user...</span></div>
<svg class="ic" style="left:340px;top:11px" width="8" height="10" viewBox="0 0 8 10"><path d="M1.5 1.5 L5.5 5 L1.5 8.5" fill="none" stroke="#1a1a1a" stroke-width="1.9"/></svg>
<svg class="ic" style="left:340px;top:41px" width="8" height="10" viewBox="0 0 8 10"><path d="M1.5 1.5 L5.5 5 L1.5 8.5" fill="none" stroke="#1a1a1a" stroke-width="1.9"/></svg>
</div>
<!-- submenu -->
<div class="menu" id="m2" style="left:577px;top:57px;width:277px;height:392px">
<div class="mi" style="top:2px"><svg class="ic" style="left:3.9px;top:4.3px" width="20.5" height="20.8" viewBox="0 0 22 22">
<defs><linearGradient id="bbg1" x1="0" y1="0" x2="0" y2="1"><stop offset="0" stop-color="#4a98cc"/><stop offset="0.5" stop-color="#1f6a9e"/><stop offset="1" stop-color="#0d4672"/></linearGradient></defs>
<rect x="0.3" y="0.3" width="21.4" height="21.4" rx="2.6" fill="url(#bbg1)"/>
<path d="M3.9 5.4 H18 L15.8 12.5 H6 Z" fill="none" stroke="#eef7fc" stroke-width="1.7" stroke-linejoin="round"/>
<path d="M10.2 5.6 L10.6 12.4 L11.2 17.4" fill="none" stroke="#eef7fc" stroke-width="1.5"/>
<circle cx="11.3" cy="18" r="1.1" fill="#eef7fc"/>
<path d="M6.5 4.2 Q8.5 1.6 10.8 3.4 Q13.2 1.6 15.4 4.2" fill="none" stroke="#9ccbe6" stroke-width="0.8"/>
</svg><span style="letter-spacing:-0.257px">BleachBit</span></div>
<div class="mi" style="top:32px"><svg class="ic" style="left:3.9px;top:4.3px" width="20.5" height="20.8" viewBox="0 0 22 22">
<defs><linearGradient id="bbg2" x1="0" y1="0" x2="0" y2="1"><stop offset="0" stop-color="#4a98cc"/><stop offset="0.5" stop-color="#1f6a9e"/><stop offset="1" stop-color="#0d4672"/></linearGradient></defs>
<rect x="0.3" y="0.3" width="21.4" height="21.4" rx="2.6" fill="url(#bbg2)"/>
<path d="M3.9 5.4 H18 L15.8 12.5 H6 Z" fill="none" stroke="#eef7fc" stroke-width="1.7" stroke-linejoin="round"/>
<path d="M10.2 5.6 L10.6 12.4 L11.2 17.4" fill="none" stroke="#eef7fc" stroke-width="1.5"/>
<circle cx="11.3" cy="18" r="1.1" fill="#eef7fc"/>
<path d="M6.5 4.2 Q8.5 1.6 10.8 3.4 Q13.2 1.6 15.4 4.2" fill="none" stroke="#9ccbe6" stroke-width="0.8"/>
</svg><span style="letter-spacing:0.028px">BleachBit as Administrator</span></div>
<div class="mi" style="top:62px"><svg class="ic" style="left:3.8px;top:4.6px" width="22.5" height="21.5" viewBox="0 0 22.5 21.5">
<path d="M0.2 20.9 Q3.4 19.8 3.9 13.5 Q3.2 0.6 11.2 0.6 Q19.2 0.6 18.5 13.5 Q19 19.8 22.3 20.9 H16.5 Q14 19.8 11.2 20.4 Q8.4 19.8 6 20.9 Z" fill="#111"/>
<ellipse cx="11.2" cy="4.4" rx="4.4" ry="3.3" fill="#e3c39c"/>
<circle cx="11.6" cy="4.6" r="0.9" fill="#d5604a"/>
<rect x="4.6" y="6.6" width="13.2" height="1.8" fill="#1d1826"/>
<ellipse cx="7.8" cy="10.8" rx="2.3" ry="2.5" fill="#f2f2f2"/><ellipse cx="14.6" cy="10.8" rx="2.3" ry="2.5" fill="#f2f2f2"/>
<circle cx="8.7" cy="11.6" r="1.1" fill="#3a4a2a"/><circle cx="13.7" cy="11.6" r="1.1" fill="#3a4a2a"/>
<ellipse cx="11.3" cy="15.2" rx="5.6" ry="3.3" fill="#e2cf1e"/>
<ellipse cx="11.3" cy="13.9" rx="3.6" ry="1.3" fill="#a9a91c" opacity="0.6"/>
<ellipse cx="11.3" cy="18.6" rx="3.7" ry="1.6" fill="#d6401a"/>
</svg><span style="letter-spacing:-0.001px">Grub Customizer</span></div>
<div class="mi" style="top:92px"><svg class="ic" style="left:3px;top:4px" width="22" height="22" viewBox="0 0 22 22">
<rect x="0.5" y="0.5" width="21" height="21" rx="2.5" fill="#3a3a3a" stroke="#8c8c8c" stroke-width="0.9"/>
<rect x="3" y="3" width="16" height="5" fill="#4a4a4a"/>
<text x="11" y="7.2" text-anchor="middle" font-family="DejaVu Sans, sans-serif" font-weight="bold" font-size="4.2" fill="#e8e8e8">JAN</text>
<rect x="3" y="9" width="16" height="9.5" fill="#252525"/>
<text x="11" y="16.8" text-anchor="middle" font-family="DejaVu Sans, sans-serif" font-weight="bold" font-size="8.5" fill="#f4f4f4">01</text>
</svg><span style="letter-spacing:-0.095px">Дата и время</span></div>
<div class="mi" style="top:122px"><svg class="ic" style="left:3px;top:3px" width="23" height="23" viewBox="0 0 23 23">
<defs><linearGradient id="pkA" x1="0" y1="0" x2="0" y2="1"><stop offset="0" stop-color="#d7b98e"/><stop offset="1" stop-color="#a9835a"/></linearGradient></defs>
<path d="M2 2 H19 L21 7 V21 H0.5 V7 Z" fill="url(#pkA)"/>
<path d="M0.5 7 H21" stroke="#8f6c46" stroke-width="0.8"/>
<rect x="9" y="2" width="3.4" height="9" fill="#e8d6b8"/>
<circle cx="16" cy="16" r="6" fill="#57b72e" stroke="#3f8f1e" stroke-width="0.6"/>
<path d="M14.5 12 H17.5 V16 H19.8 L16 20 L12.2 16 H14.5 Z" fill="#fff"/>
</svg><span style="letter-spacing:-0.075px">Менеджер пакетов Synaptic</span></div>
<div class="mi" style="top:152px"><svg class="ic" style="left:3px;top:3px" width="23" height="23" viewBox="0 0 23 23">
<defs><linearGradient id="pkB" x1="0" y1="0" x2="0" y2="1"><stop offset="0" stop-color="#d7b98e"/><stop offset="1" stop-color="#a9835a"/></linearGradient></defs>
<path d="M2 1 H19 L21 6.5 V21.5 H0.5 V6.5 Z" fill="url(#pkB)"/>
<path d="M0.5 6.5 H21" stroke="#8f6c46" stroke-width="0.8"/>
<rect x="9" y="1" width="3.4" height="10" fill="#e8d6b8"/>
<rect x="13" y="15" width="9" height="6.5" rx="1" fill="#a5d88a" stroke="#d2efc0" stroke-width="0.8"/>
</svg><span style="letter-spacing:-0.110px">Менеджер программ</span></div>
<div class="mi" style="top:182px"><svg class="ic" style="left:3px;top:4px" width="22" height="22" viewBox="0 0 22 22">
<defs><linearGradient id="prg" x1="0" y1="0" x2="0" y2="1"><stop offset="0" stop-color="#e9e9e9"/><stop offset="0.55" stop-color="#c4c4c4"/><stop offset="0.6" stop-color="#8c8c8c"/><stop offset="1" stop-color="#6e6e6e"/></linearGradient></defs>
<rect x="0.6" y="6" width="20.8" height="15.2" rx="2.2" fill="url(#prg)" stroke="#9c9c9c" stroke-width="0.6"/>
<path d="M4 1.6 Q4 0.6 5 0.6 H17 Q18 0.6 18 1.6 V12.2 H4 Z" fill="#141414"/>
<path d="M6 3 H7.6 M8.8 3 H10.4 M11.6 3 H13.2 M14.4 3 H16 M6 5.2 H7.6 M8.8 5.2 H10.4 M11.6 5.2 H13.2 M14.4 5.2 H16 M6 7.4 H7.6 M8.8 7.4 H10.4 M11.6 7.4 H13.2 M14.4 7.4 H16" stroke="#3a3a3a" stroke-width="1.1"/>
<rect x="2.4" y="12.2" width="17.2" height="1.4" fill="#f4f4f4"/>
</svg><span style="letter-spacing:-0.019px">Настройки принтера</span></div>
<div class="mi" style="top:212px"><svg class="ic" style="left:2px;top:4px" width="24" height="22" viewBox="0 0 24 22">
<path d="M1 2.5 Q1 1 2.5 1 H9 L10.5 3 H21.5 Q23 3 23 4.5 V7 H1 Z" fill="#eef1f3" stroke="#b9c2c8" stroke-width="0.6"/>
<rect x="0.5" y="5.5" width="23" height="15.5" rx="1.2" fill="#5da7d4"/>
<rect x="0.5" y="5.5" width="23" height="1" fill="#a5d0ea"/>
<rect x="5.5" y="8.5" width="13" height="10" fill="#f4f6f7"/>
<path d="M8.5 12 L12 9.8 L15.5 12 V16.5 H8.5 Z" fill="#2a2a2a"/>
</svg><span style="letter-spacing:0.167px">Опубликованные папки</span></div>
<div class="mi" style="top:242px"><svg class="ic" style="left:3px;top:4px" width="22" height="22" viewBox="0 0 22 22">
<defs><linearGradient id="usg" x1="0" y1="0" x2="0" y2="1"><stop offset="0" stop-color="#f6c95a"/><stop offset="1" stop-color="#dc9a28"/></linearGradient></defs>
<rect x="0.5" y="0.5" width="21" height="21" rx="2.5" fill="url(#usg)" stroke="#c4892a" stroke-width="0.8"/>
<rect x="0.5" y="17" width="21" height="4.5" fill="#c98a26"/>
<circle cx="6.5" cy="9.5" r="2.3" fill="#6a4a18"/><circle cx="15.5" cy="9.5" r="2.3" fill="#6a4a18"/>
<path d="M2.5 16.5 Q3 12.5 6.5 12.5 H15.5 Q19 12.5 19.5 16.5 Z" fill="#6a4a18"/>
<circle cx="11" cy="8" r="3.2" fill="#241808"/>
<path d="M5.5 16.8 Q6 12 11 12 Q16 12 16.5 16.8 Z" fill="#241808"/>
</svg><span style="letter-spacing:0.077px">Пользователи и группы</span></div>
<div class="mi" style="top:272px"><svg class="ic" style="left:3px;top:4px" width="22" height="22" viewBox="0 0 22 22">
<defs><linearGradient id="gpg" x1="0" y1="0" x2="1" y2="1"><stop offset="0" stop-color="#f06a4a"/><stop offset="0.35" stop-color="#f3a73a"/><stop offset="0.6" stop-color="#f2d85a"/><stop offset="0.8" stop-color="#8fd06a"/><stop offset="1" stop-color="#5aa9e0"/></linearGradient></defs>
<rect x="0.5" y="0.5" width="21" height="21" rx="2" fill="#e9e9e9" stroke="#9a9a9a" stroke-width="0.8"/>
<rect x="2.5" y="2.5" width="17" height="11" fill="url(#gpg)"/>
<rect x="1.5" y="15.5" width="19" height="5" fill="#f7f7f7" stroke="#b5b5b5" stroke-width="0.6"/>
<path d="M3.5 18 H12" stroke="#777" stroke-width="1.2"/><path d="M14 18 H15.2 M16.2 18 H17.4 M18.2 18 H19.2" stroke="#555" stroke-width="1.4"/>
</svg><span style="letter-spacing:-0.022px">Редактор разделов GParted</span></div>
<div class="mi" style="top:302px"><svg class="ic" style="left:3px;top:3px" width="22" height="24" viewBox="0 0 22 24">
<defs><linearGradient id="bkg" x1="0" y1="0" x2="0" y2="1"><stop offset="0" stop-color="#f4f4f4"/><stop offset="1" stop-color="#cfcfcf"/></linearGradient></defs>
<rect x="0.5" y="0.5" width="21" height="22" rx="2.5" fill="url(#bkg)" stroke="#b1b1b1" stroke-width="0.8"/>
<rect x="0.5" y="20.5" width="21" height="2.5" fill="#3f9a3f"/>
<path d="M6.2 7 A5.5 5.5 0 1 1 6 12.5" fill="none" stroke="#9a9a9a" stroke-width="1.5"/>
<path d="M3.8 7.6 L6.8 9.5 L7.4 5.8 Z" fill="#9a9a9a"/>
<path d="M11 7 V10.5 L13.5 12" fill="none" stroke="#9a9a9a" stroke-width="1.3"/>
</svg><span style="letter-spacing:-0.053px">Резервное копирование</span></div>
<div class="mi" style="top:332px"><svg class="ic" style="left:3px;top:4px" width="22" height="22" viewBox="0 0 22 22">
<defs><linearGradient id="ntg" x1="0" y1="0" x2="0" y2="1"><stop offset="0" stop-color="#f0f0f0"/><stop offset="1" stop-color="#bcbcbc"/></linearGradient></defs>
<rect x="0.5" y="0.5" width="21" height="21" rx="2.5" fill="url(#ntg)" stroke="#a9a9a9" stroke-width="0.8"/>
<path d="M4.5 16.5 V7.5 H7.5 V5.5 H9 V4 H13 V5.5 H14.5 V7.5 H17.5 V16.5 Z" fill="#161616"/>
<path d="M6.5 15.5 V13.5 M8.5 15.5 V13.5 M10.5 15.5 V13.5 M12.5 15.5 V13.5 M14.5 15.5 V13.5" stroke="#d9b43a" stroke-width="1"/>
<rect x="0.5" y="18" width="21" height="3.5" fill="#a9a9a9"/>
</svg><span style="letter-spacing:-0.223px">Сеть</span></div>
<div class="mi" style="top:362px"><svg class="ic" style="left:2px;top:4px" width="24" height="23" viewBox="0 0 24 23">
<path d="M6 1 H16.5 L18.5 3 V20 Q18.5 22 16.5 22 H7.5 Q5.5 22 5.5 20 V1.5 Z" fill="#f1f1f1" stroke="#6a6a6a" stroke-width="1"/>
<rect x="7.5" y="4.5" width="9" height="3" fill="#fff" stroke="#6a6a6a" stroke-width="0.7"/>
<rect x="7.5" y="9" width="9" height="3" fill="#fff" stroke="#6a6a6a" stroke-width="0.7"/>
<rect x="7.5" y="13.5" width="9" height="3" fill="#fff" stroke="#6a6a6a" stroke-width="0.7"/>
<path d="M9 6 H15 M9 10.5 H15 M9 15 H15" stroke="#888" stroke-width="0.8" stroke-dasharray="1.5 0.8"/>
<path d="M0.5 13 H5 M19 13 H23.5" stroke="#4a4a4a" stroke-width="1.6"/>
<path d="M2 11 V15 M22 11 V15" stroke="#4a4a4a" stroke-width="1"/>
</svg><span style="letter-spacing:-0.208px">Службы</span></div>
</div>
</body>
</html>
